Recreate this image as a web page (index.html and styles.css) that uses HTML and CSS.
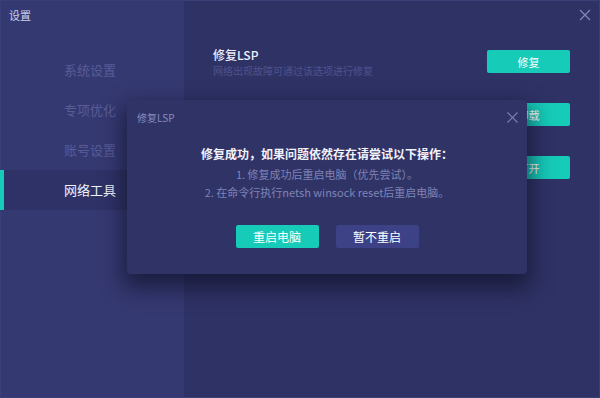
FILE: index.html
```html
<!DOCTYPE html>
<html lang="zh-CN">
<head>
<meta charset="utf-8">
<title>设置</title>
<link rel="stylesheet" href="styles.css">
</head>
<body>
<div class="window">
  <aside class="sidebar">
    <div class="app-title">设置</div>
    <nav class="menu">
      <div class="menu-item">系统设置</div>
      <div class="menu-item">专项优化</div>
      <div class="menu-item">账号设置</div>
      <div class="menu-item active">网络工具</div>
    </nav>
  </aside>
  <main class="content">
    <div class="topbar">
      <svg class="win-close" width="12" height="12" viewBox="0 0 12 12"><path d="M1 1L11 11M11 1L1 11" stroke="currentColor" stroke-width="1.2" fill="none"/></svg>
    </div>
    <div class="row">
      <div class="row-text">
        <div class="row-title">修复LSP</div>
        <div class="row-desc">网络出现故障可通过该选项进行修复</div>
      </div>
      <button class="btn btn-teal">修复</button>
    </div>
    <div class="row">
      <div class="row-text"></div>
      <button class="btn btn-teal">卸载</button>
    </div>
    <div class="row">
      <div class="row-text"></div>
      <button class="btn btn-teal">打开</button>
    </div>
  </main>

  <div class="modal">
    <div class="modal-head">
      <span class="modal-title">修复LSP</span>
      <svg class="modal-close" width="11" height="11" viewBox="0 0 11 11"><path d="M0.5 0.5L10.5 10.5M10.5 0.5L0.5 10.5" stroke="currentColor" stroke-width="1.1" fill="none"/></svg>
    </div>
    <div class="modal-body">
      <p class="modal-msg">修复成功，如果问题依然存在请尝试以下操作：</p>
      <p class="modal-step">1. 修复成功后重启电脑（优先尝试）。</p>
      <p class="modal-step">2. 在命令行执行netsh winsock reset后重启电脑。</p>
    </div>
    <div class="modal-actions">
      <button class="btn btn-teal">重启电脑</button>
      <button class="btn btn-muted">暂不重启</button>
    </div>
  </div>
</div>
</body>
</html>
```

FILE: styles.css
```css
* { box-sizing: border-box; }
html, body {
  margin: 0;
  padding: 0;
  width: 600px;
  height: 398px;
  overflow: hidden;
  background: #2f3265;
  font-family: "Noto Sans CJK SC", "Noto Sans", sans-serif;
}
.window {
  position: relative;
  display: flex;
  width: 600px;
  height: 398px;
  border: 1px solid #3b3f78;
  background: #2f3265;
}
.sidebar {
  width: 183px;
  flex: none;
  background: #353971;
  display: flex;
  flex-direction: column;
}
.app-title {
  height: 49px;
  padding: 7px 0 0 8px;
  font-size: 11px;
  line-height: 15px;
  color: #cdd0ea;
}
.menu { display: flex; flex-direction: column; }
.menu-item {
  height: 40px;
  line-height: 40px;
  font-size: 13px;
  color: #585c97;
  border-left: 4px solid transparent;
  margin-left: -1px;
  padding-left: 60px;
}
.menu-item.active {
  background: #2f3266;
  color: #f2f3fb;
  border-left-color: #16cbb8;
}
.content {
  flex: 1;
  display: flex;
  flex-direction: column;
  padding-left: 29px;
  padding-right: 29px;
}
.topbar {
  height: 34px;
  display: flex;
  justify-content: flex-end;
  padding-top: 8px;
  margin-right: -21px;
}
.win-close { color: #8487b9; }
.row {
  height: 53px;
  display: flex;
  align-items: center;
  justify-content: space-between;
}
.row-text { display: flex; flex-direction: column; }
.row-title {
  font-size: 12px;
  line-height: 17px;
  color: #eceefa;
  font-weight: 500;
}
.row-desc {
  font-size: 10px;
  line-height: 15px;
  color: #4e5290;
}
.btn {
  width: 83px;
  height: 23px;
  border: none;
  border-radius: 2px;
  font-family: inherit;
  font-size: 11px;
  color: #ffffff;
  padding: 0;
  cursor: pointer;
}
.btn-teal { background: #16cbb8; }
.btn-muted { background: #3d4186; }
.modal {
  position: absolute;
  left: 126px;
  top: 99px;
  width: 400px;
  height: 174px;
  background: #303366;
  border-radius: 4px;
  box-shadow: 0 10px 22px 4px rgba(14, 16, 38, 0.65);
  display: flex;
  flex-direction: column;
}
.modal-head {
  height: 32px;
  display: flex;
  align-items: center;
  justify-content: space-between;
  padding: 2px 9px 0 10px;
}
.modal-title {
  font-size: 10px;
  color: #8a8dbf;
}
.modal-close { color: #7d81b3; }
.modal-body {
  display: flex;
  flex-direction: column;
  align-items: center;
  padding-top: 13px;
}
.modal-body p { margin: 0; }
.modal-msg {
  font-size: 12px;
  line-height: 18px;
  color: #f1f2fb;
  font-weight: 700;
}
.modal-body .modal-msg { margin-bottom: 3px; }
.modal-step {
  font-size: 11px;
  line-height: 17px;
}
.modal-body .modal-step { margin-bottom: 1px; color: #7f83b7; }
.modal-actions {
  display: flex;
  justify-content: center;
  gap: 17px;
  margin-top: 23px;
}
.modal-actions .btn { font-size: 12px; }
```
